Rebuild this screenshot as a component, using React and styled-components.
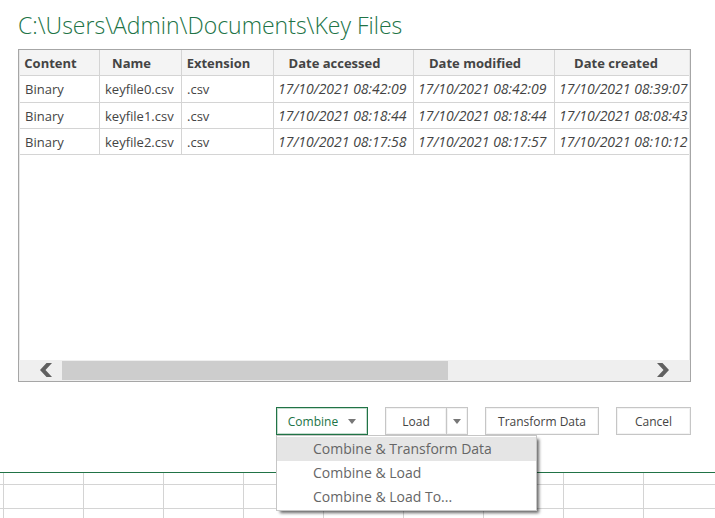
import React from 'react';
import styled, { createGlobalStyle } from 'styled-components';

const GlobalStyle = createGlobalStyle`
  * {
    box-sizing: border-box;
  }
  body {
    margin: 0;
    background: #fff;
    color: #444;
    font-family: 'Open Sans', 'Noto Sans', sans-serif;
    font-size: 13px;
  }
  button {
    font: inherit;
    color: inherit;
  }
`;

const Page = styled.div`
  display: flex;
  flex-direction: column;
  min-height: 100vh;
`;

const Dialog = styled.main`
  padding: 8px 24px 37px 18px;
  border-bottom: 1px solid #217346;
`;

const Title = styled.h1`
  margin: 0 0 7px;
  color: #217346;
  font-size: 23px;
  font-weight: 300;
  line-height: 34px;
`;

const Preview = styled.section`
  display: flex;
  flex-direction: column;
  height: 333px;
  border: 1px solid #a6a6a6;
`;

const TableArea = styled.div`
  flex: 1;
  overflow: hidden;
  border: solid #e6e6e6;
  border-width: 0 1px;
`;

const FileTable = styled.table`
  width: 676px;
  table-layout: fixed;
  border-collapse: separate;
  border-spacing: 0;

  tbody tr:first-child td {
    height: 27px;
  }
`;

const Column = styled.col`
  width: ${({ $width }) => $width}px;
`;

const HeaderCell = styled.th`
  height: 26px;
  padding: 0 18px 0 0;
  background: #f4f4f4;
  border: solid #d4d4d4;
  border-width: 0 1px 1px 0;
  font-weight: 700;
  line-height: 18px;
  white-space: nowrap;
`;

const Cell = styled.td`
  height: 26px;
  padding: 0 0 0 5px;
  border: solid #d4d4d4;
  border-width: 0 1px 1px 0;
  line-height: 18px;
  white-space: nowrap;
`;

const DateCell = styled(Cell)`
  padding-left: 4px;
  font-size: 14px;
  font-style: italic;
`;

const ScrollBar = styled.div`
  display: flex;
  align-items: center;
  height: 21px;
  background: #efefef;
`;

const ScrollButton = styled.button`
  display: flex;
  justify-content: ${({ $right }) => ($right ? 'flex-start' : 'flex-end')};
  width: 43px;
  padding: 0 10px 2px;
  border: none;
  background: none;
`;

const Track = styled.div`
  flex: 1;
`;

const Thumb = styled.div`
  width: 66%;
  height: 19px;
  background: #cdcdcd;
`;

const Actions = styled.div`
  display: flex;
  justify-content: flex-end;
  gap: 17px;
  margin: 25px 0 0;
`;

const MenuAnchor = styled.div`
  position: relative;
`;

const ActionButton = styled.button`
  display: flex;
  align-items: center;
  justify-content: center;
  gap: 10px;
  width: ${({ $width }) => $width}px;
  height: 28px;
  padding: 0;
  background: #fff;
  border: 1px solid ${({ $active }) => ($active ? '#217346' : '#c6c6c6')};
  box-shadow: inset 0 0 0 1px ${({ $active }) => ($active ? '#c5dccf' : '#f3f3f3')};
  color: ${({ $active }) => ($active ? '#217346' : '#444')};
  font-size: 12px;
  white-space: nowrap;
`;

const SplitButton = styled.div`
  display: flex;

  button + button {
    border-left: none;
  }
`;

const Menu = styled.ul`
  position: absolute;
  top: 100%;
  left: 0;
  width: 261px;
  margin: 0;
  padding: 1px 0;
  list-style: none;
  background: #fff;
  border: 1px solid #c6c6c6;
  box-shadow: 3px 3px 3px -1px rgba(0, 0, 0, 0.6);
`;

const MenuItem = styled.button`
  display: block;
  width: 100%;
  height: 24px;
  padding: 0 0 0 36px;
  border: none;
  background: ${({ $active }) => ($active ? '#e5e5e5' : 'transparent')};
  color: #666;
  font-size: 14px;
  line-height: 24px;
  text-align: left;
`;

const Sheet = styled.div`
  flex: 1;
  min-height: 45px;
  background: linear-gradient(to right, #d4d4d4 1px, transparent 1px) 3px 0 / 80px 100%,
    linear-gradient(to bottom, #d4d4d4 1px, transparent 1px) 0 11px / 100% 24px;
`;

const columns = [
  { title: 'Content', width: 80 },
  { title: 'Name', width: 82 },
  { title: 'Extension', width: 92 },
  { title: 'Date accessed', width: 140, isDate: true },
  { title: 'Date modified', width: 141, isDate: true },
  { title: 'Date created', width: 141, isDate: true },
];

const files = [
  ['Binary', 'keyfile0.csv', '.csv', '17/10/2021 08:42:09', '17/10/2021 08:42:09', '17/10/2021 08:39:07'],
  ['Binary', 'keyfile1.csv', '.csv', '17/10/2021 08:18:44', '17/10/2021 08:18:44', '17/10/2021 08:08:43'],
  ['Binary', 'keyfile2.csv', '.csv', '17/10/2021 08:17:58', '17/10/2021 08:17:57', '17/10/2021 08:10:12'],
];

const menuItems = ['Combine & Transform Data', 'Combine & Load', 'Combine & Load To...'];

function Chevron({ right }) {
  return (
    <svg width='12' height='14' viewBox='0 0 12 14' aria-hidden='true'>
      <path
        d={right ? 'M12 7 5.500 0H0l6.500 7L0 14h5.500z' : 'M0 7 6.500 0H12L5.500 7l6.500 7H6.500z'}
        fill='#606060'
      />
    </svg>
  );
}

function Caret() {
  return (
    <svg width='8' height='5' viewBox='0 0 8 5' aria-hidden='true'>
      <path d='M0 0h8L4 5z' fill='#777' />
    </svg>
  );
}

function FilePreview() {
  return (
    <Preview>
      <TableArea>
        <FileTable>
          <colgroup>
            {columns.map(({ title, width }) => (
              <Column key={title} $width={width} />
            ))}
          </colgroup>
          <thead>
            <tr>
              {columns.map(({ title }) => (
                <HeaderCell key={title} scope='col'>
                  {title}
                </HeaderCell>
              ))}
            </tr>
          </thead>
          <tbody>
            {files.map((file) => (
              <tr key={file[1]}>
                {columns.map(({ title, isDate }, index) =>
                  isDate ? (
                    <DateCell key={title}>{file[index]}</DateCell>
                  ) : (
                    <Cell key={title}>{file[index]}</Cell>
                  )
                )}
              </tr>
            ))}
          </tbody>
        </FileTable>
      </TableArea>
      <ScrollBar>
        <ScrollButton type='button' aria-label='Scroll left'>
          <Chevron />
        </ScrollButton>
        <Track>
          <Thumb />
        </Track>
        <ScrollButton type='button' aria-label='Scroll right' $right>
          <Chevron right />
        </ScrollButton>
      </ScrollBar>
    </Preview>
  );
}

export default function App() {
  return (
    <Page>
      <GlobalStyle />
      <Dialog>
        <Title>C:\Users\Admin\Documents\Key Files</Title>
        <FilePreview />
        <Actions>
          <MenuAnchor>
            <ActionButton type='button' aria-haspopup='menu' aria-expanded='true' $width={92} $active>
              Combine
              <Caret />
            </ActionButton>
            <Menu role='menu'>
              {menuItems.map((item, index) => (
                <li key={item} role='none'>
                  <MenuItem type='button' role='menuitem' $active={index === 0}>
                    {item}
                  </MenuItem>
                </li>
              ))}
            </Menu>
          </MenuAnchor>
          <SplitButton>
            <ActionButton type='button' $width={62}>
              Load
            </ActionButton>
            <ActionButton type='button' aria-label='Load options' $width={21}>
              <Caret />
            </ActionButton>
          </SplitButton>
          <ActionButton type='button' $width={114}>
            Transform Data
          </ActionButton>
          <ActionButton type='button' $width={75}>
            Cancel
          </ActionButton>
        </Actions>
      </Dialog>
      <Sheet />
    </Page>
  );
}
